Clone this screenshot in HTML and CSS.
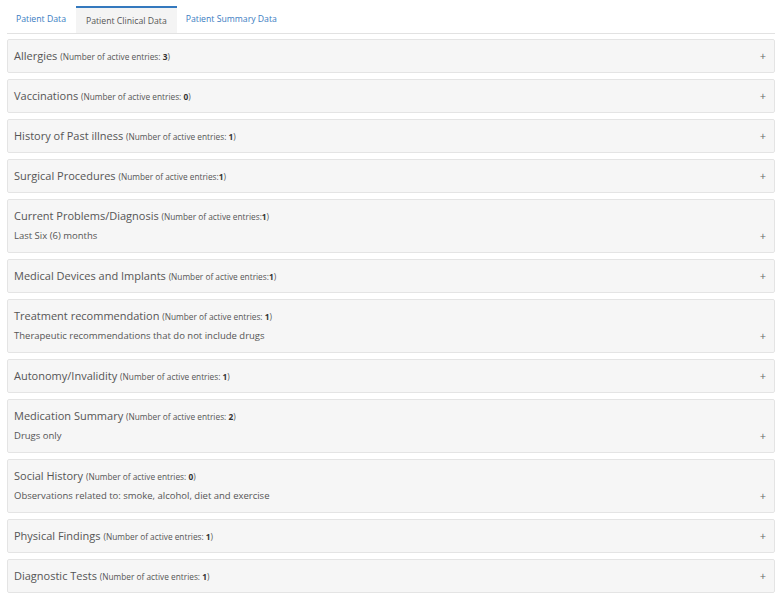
FILE: index.html
```html
<!DOCTYPE html>
<html lang="en">
<head>
    <meta charset="UTF-8">
    <title>Patient Clinical Data</title>
    <link rel="stylesheet" href="styles.css">
</head>
<body>
    <ul class="tabs">
        <li><a href="#">Patient Data</a></li>
        <li class="active"><a href="#">Patient Clinical Data</a></li>
        <li><a href="#">Patient Summary Data</a></li>
    </ul>

    <div class="panels">
        <div class="panel">
            <div class="panel-text">
                <div class="title">Allergies <small>(Number of active entries: <b>3</b>)</small></div>
            </div>
            <span class="toggle">+</span>
        </div>
        <div class="panel">
            <div class="panel-text">
                <div class="title">Vaccinations <small>(Number of active entries: <b>0</b>)</small></div>
            </div>
            <span class="toggle">+</span>
        </div>
        <div class="panel">
            <div class="panel-text">
                <div class="title">History of Past illness <small>(Number of active entries: <b>1</b>)</small></div>
            </div>
            <span class="toggle">+</span>
        </div>
        <div class="panel">
            <div class="panel-text">
                <div class="title">Surgical Procedures <small>(Number of active entries:<b>1</b>)</small></div>
            </div>
            <span class="toggle">+</span>
        </div>
        <div class="panel">
            <div class="panel-text">
                <div class="title">Current Problems/Diagnosis <small>(Number of active entries:<b>1</b>)</small></div>
                <div class="subtitle">Last Six (6) months</div>
            </div>
            <span class="toggle">+</span>
        </div>
        <div class="panel">
            <div class="panel-text">
                <div class="title">Medical Devices and Implants <small>(Number of active entries:<b>1</b>)</small></div>
            </div>
            <span class="toggle">+</span>
        </div>
        <div class="panel">
            <div class="panel-text">
                <div class="title">Treatment recommendation <small>(Number of active entries: <b>1</b>)</small></div>
                <div class="subtitle">Therapeutic recommendations that do not include drugs</div>
            </div>
            <span class="toggle">+</span>
        </div>
        <div class="panel">
            <div class="panel-text">
                <div class="title">Autonomy/Invalidity <small>(Number of active entries: <b>1</b>)</small></div>
            </div>
            <span class="toggle">+</span>
        </div>
        <div class="panel">
            <div class="panel-text">
                <div class="title">Medication Summary <small>(Number of active entries: <b>2</b>)</small></div>
                <div class="subtitle">Drugs only</div>
            </div>
            <span class="toggle">+</span>
        </div>
        <div class="panel">
            <div class="panel-text">
                <div class="title">Social History <small>(Number of active entries: <b>0</b>)</small></div>
                <div class="subtitle">Observations related to: smoke, alcohol, diet and exercise</div>
            </div>
            <span class="toggle">+</span>
        </div>
        <div class="panel">
            <div class="panel-text">
                <div class="title">Physical Findings <small>(Number of active entries: <b>1</b>)</small></div>
            </div>
            <span class="toggle">+</span>
        </div>
        <div class="panel">
            <div class="panel-text">
                <div class="title">Diagnostic Tests <small>(Number of active entries: <b>1</b>)</small></div>
            </div>
            <span class="toggle">+</span>
        </div>
    </div>
</body>
</html>
```

FILE: styles.css
```css
body {
    font-family: 'Open Sans', 'DejaVu Sans', sans-serif;
    color: #555;
    background-color: #fff;
    margin: 6px 8px 0 7px;
}
.tabs {
    list-style-type: none;
    margin: 0;
    padding: 0;
    display: flex;
    align-items: flex-start;
    border-bottom: 1px solid #e2e2e2;
}
.tabs li a {
    display: block;
    padding: 6px 10px 5px 9px;
    font-size: 8.7px;
    line-height: 14px;
    color: #3b7cc2;
    text-decoration: none;
}
.tabs li.active a {
    border-top: 2px solid #3479be;
    background-color: #f4f4f4;
    color: #555;
    padding-left: 10px;
}
.panels {
    margin-top: 5px;
    display: flex;
    flex-direction: column;
    gap: 6px;
}
.panel {
    display: flex;
    align-items: flex-end;
    justify-content: space-between;
    background-color: #f6f6f6;
    border: 1px solid #e4e4e4;
    border-radius: 2px;
    padding: 9px 8px 9px 6px;
}
.title {
    font-size: 11px;
    line-height: 14px;
    height: 14px;
    color: #555;
}
.title small {
    font-size: 8.3px;
    line-height: 1;
    color: #555;
}
.title small b {
    color: #333;
}
.subtitle {
    margin-top: 6px;
    font-size: 9.5px;
    line-height: 14px;
    height: 14px;
    color: #555;
}
.toggle {
    font-size: 11px;
    line-height: 14px;
    height: 14px;
    color: #666;
}
```
